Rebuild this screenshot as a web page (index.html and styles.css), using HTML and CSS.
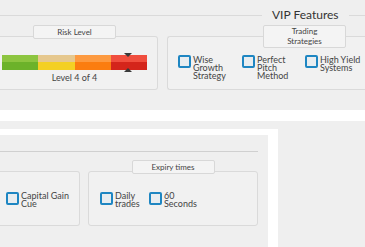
FILE: index.html
```html
<!DOCTYPE html>
<html lang="en">
<head>
    <meta charset="UTF-8">
    <title>VIP Features</title>
    <link rel="stylesheet" href="styles.css">
</head>
<body>
    <section class="vip">
        <div class="vip-head">
            <span class="rule rule-left"></span>
            <h2>VIP Features</h2>
            <span class="rule rule-right"></span>
        </div>

        <div class="vip-row">
            <div class="group risk">
                <div class="legend">Risk Level</div>
                <div class="meter">
                    <span class="seg s1"></span>
                    <span class="seg s2"></span>
                    <span class="seg s3"></span>
                    <span class="seg s4"></span>
                    <svg class="marker" width="8" height="20" viewBox="0 0 8 20">
                        <polygon points="0,0 8,0 4,4" fill="#3a3a3a"/>
                        <polygon points="4,15 8,19 0,19" fill="#3a3a3a"/>
                    </svg>
                </div>
                <div class="meter-label">Level 4 of 4</div>
            </div>

            <div class="group strategies">
                <div class="legend legend-tall">Trading<br>Strategies</div>
                <div class="options options-strategies">
                    <label class="opt"><span class="box"></span><span class="opt-text">Wise<br>Growth<br>Strategy</span></label>
                    <label class="opt"><span class="box"></span><span class="opt-text">Perfect<br>Pitch<br>Method</span></label>
                    <label class="opt"><span class="box"></span><span class="opt-text">High Yield<br>Systems</span></label>
                </div>
            </div>
        </div>
    </section>

    <div class="strip"></div>

    <div class="card">
        <div class="panel">
            <div class="panel-rule"></div>
            <div class="panel-row">
                <div class="group signals">
                    <div class="options options-signals">
                        <label class="opt"><span class="box"></span><span class="opt-text">Capital Gain<br>Cue</span></label>
                    </div>
                </div>
                <div class="group expiry">
                    <div class="legend legend-center">Expiry times</div>
                    <div class="options options-expiry">
                        <label class="opt"><span class="box"></span><span class="opt-text">Daily<br>trades</span></label>
                        <label class="opt"><span class="box"></span><span class="opt-text">60<br>Seconds</span></label>
                    </div>
                </div>
            </div>
        </div>
    </div>
</body>
</html>
```

FILE: styles.css
```css
html, body {
    margin: 0;
    overflow: hidden;
}

body {
    width: 365px;
    height: 247px;
    background-color: #efefef;
    font-family: Lato, "Noto Sans", sans-serif;
    color: #444;
}

.vip {
    height: 110px;
}

.vip-head {
    display: flex;
    align-items: center;
    gap: 10px;
    height: 30px;
}

.vip-head h2 {
    margin: 0;
    font-size: 12px;
    font-weight: normal;
    line-height: 14px;
    color: #333;
    white-space: nowrap;
}

.rule {
    height: 1px;
    background: #dadada;
}

.rule-left {
    width: 262px;
    flex: none;
}

.rule-right {
    flex: 1;
}

.vip-row {
    display: flex;
    gap: 9px;
    margin-top: 6px;
}

.group {
    box-sizing: border-box;
    display: flex;
    flex-direction: column;
    border: 1px solid #dadada;
    border-radius: 3px;
    background: #f1f1f1;
}

.legend {
    box-sizing: border-box;
    width: 83px;
    margin-top: -12px;
    padding: 1px 0;
    border: 1px solid #d8d8d8;
    border-radius: 2px;
    background: #f4f4f4;
    font-size: 8px;
    line-height: 10px;
    text-align: center;
    color: #444;
}

.legend-tall {
    line-height: 9.5px;
}

.legend-center {
    margin-left: auto;
    margin-right: auto;
}

/* risk meter */
.risk {
    width: 158px;
    height: 54px;
    padding: 0 10px 0 2px;
    border-left: none;
    border-radius: 0 3px 3px 0;
    flex: none;
}

.risk .legend {
    margin-left: 31px;
}

.meter {
    position: relative;
    display: flex;
    height: 15px;
    margin-top: 16px;
}

.seg {
    flex: 1;
}

.s1 { background: linear-gradient(#8dc540 50%, #6cb22a 50%); }
.s2 { background: linear-gradient(#e6c88e 50%, #f4d024 50%); }
.s3 { background: linear-gradient(#fd9a40 50%, #fb7d10 50%); }
.s4 { background: linear-gradient(#f04e3e 50%, #d4251b 50%); }

.marker {
    position: absolute;
    left: 122px;
    top: -2px;
}

.meter-label {
    margin-top: 2px;
    font-size: 9px;
    line-height: 11px;
    text-align: center;
}

/* checkbox options */
.strategies {
    flex: 1;
    height: 54px;
    border-right: none;
    border-radius: 3px 0 0 3px;
}

.strategies .legend {
    margin-left: 95px;
}

.options {
    display: grid;
    align-items: start;
}

.options-strategies {
    grid-template-columns: 64px 63px auto;
    margin-top: 7px;
    padding-left: 10px;
}

.opt {
    display: flex;
    align-items: flex-start;
    gap: 2px;
    font-size: 9px;
    line-height: 8.2px;
}

.box {
    box-sizing: border-box;
    width: 13px;
    height: 13px;
    flex: none;
    border: 2px solid #1e86c2;
    border-radius: 2px;
    background: #e8edf0;
}

.opt-text {
    margin-top: 1px;
    white-space: nowrap;
}

.options-signals .opt,
.options-expiry .opt {
    line-height: 8.4px;
}

.options-signals .opt-text,
.options-expiry .opt-text {
    margin-top: 0;
}

/* lower card */
.strip {
    height: 11px;
    background: #fff;
}

.card {
    box-sizing: border-box;
    width: 278px;
    height: 118px;
    margin-top: 8px;
    padding: 6px 10px 0 0;
    background: #fff;
}

.panel {
    box-sizing: border-box;
    height: 112px;
    padding: 16px 10px 0 0;
    background: #efefef;
}

.panel-rule {
    height: 1px;
    background: #d0d0d0;
}

.panel-row {
    display: flex;
    gap: 8px;
    margin-top: 19px;
}

.signals {
    flex: 1;
    height: 55px;
    border-left: none;
    border-radius: 0 3px 3px 0;
}

.options-signals {
    margin-top: 20px;
    padding-left: 6px;
}

.expiry {
    width: 170px;
    height: 55px;
}

.options-expiry {
    grid-template-columns: 49px auto;
    margin-top: 18px;
    padding-left: 11px;
}
```
